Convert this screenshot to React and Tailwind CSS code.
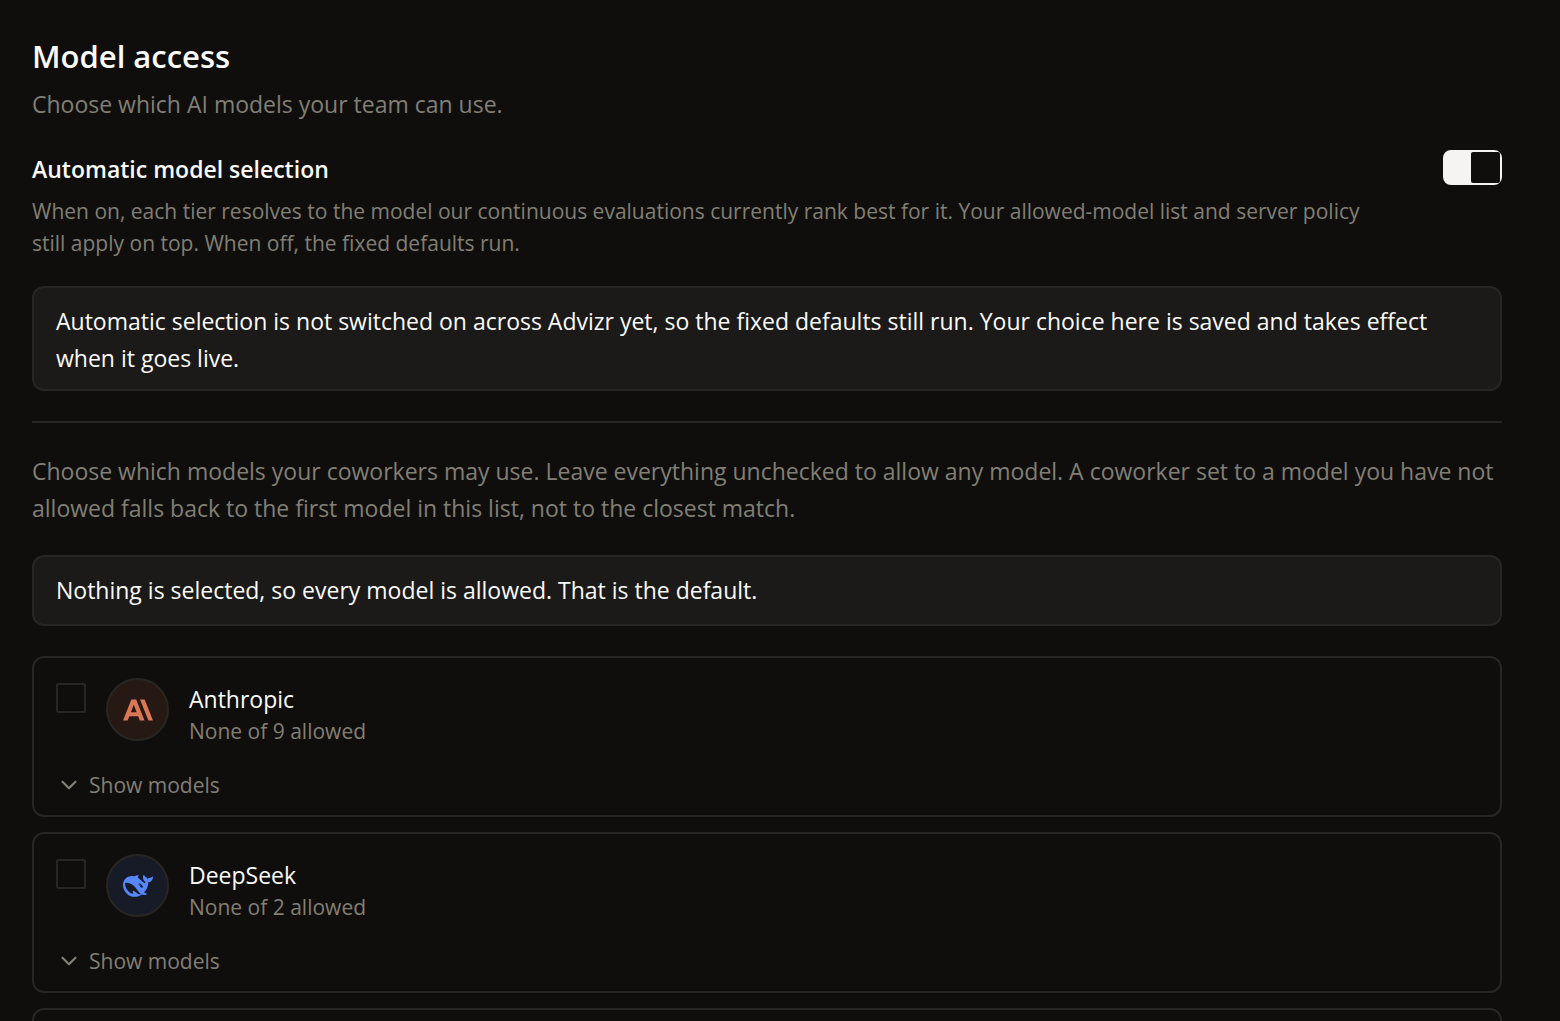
import { useState } from 'react';
import { ChevronDown } from 'lucide-react';

const AnthropicLogo = () => (
    <svg viewBox="0 0 24 24" fill="currentColor" className="w-[30px] h-[30px]" aria-hidden="true">
        <path d="M17.3041 3.541h-3.6718l6.696 16.918H24Zm-10.6082 0L0 20.459h3.7442l1.3693-3.5527h7.0052l1.3693 3.5528h3.7442L10.5363 3.5409Zm-.3712 10.2232 2.2914-5.9456 2.2914 5.9456Z" />
    </svg>
);

const DeepSeekLogo = () => (
    <svg viewBox="0 0 24 24" fill="currentColor" className="w-[30px] h-[30px]" aria-hidden="true">
        <path d="M23.748 4.482c-.254-.124-.364.113-.512.234-.051.039-.094.09-.137.136-.372.397-.806.657-1.373.626-.829-.046-1.537.214-2.163.848-.133-.782-.575-1.248-1.247-1.548-.352-.156-.708-.311-.955-.65-.172-.241-.219-.51-.305-.774-.055-.16-.11-.323-.293-.35-.2-.031-.278.136-.356.276-.313.572-.434 1.202-.422 1.84.027 1.436.633 2.58 1.838 3.393.137.093.172.187.129.323-.082.28-.18.552-.266.833-.055.179-.137.217-.329.14a5.526 5.526 0 01-1.736-1.18c-.857-.828-1.631-1.742-2.597-2.458a11.365 11.365 0 00-.689-.471c-.985-.957.13-1.743.388-1.836.27-.098.093-.432-.779-.428-.872.004-1.67.295-2.687.684a3.055 3.055 0 01-.465.137 9.597 9.597 0 00-2.883-.102c-1.885.21-3.39 1.102-4.497 2.623C.082 8.606-.231 10.684.152 12.85c.403 2.284 1.569 4.175 3.36 5.653 1.858 1.533 3.997 2.284 6.438 2.14 1.482-.085 3.133-.284 4.994-1.86.47.234.962.327 1.78.397.63.059 1.236-.03 1.705-.128.735-.156.684-.837.419-.961-2.155-1.004-1.682-.595-2.113-.926 1.096-1.296 2.746-2.642 3.392-7.003.05-.347.007-.565 0-.845-.004-.17.035-.237.23-.256a4.173 4.173 0 001.545-.475c1.396-.763 1.96-2.015 2.093-3.517.02-.23-.004-.467-.247-.588zM11.581 18c-2.089-1.642-3.102-2.183-3.52-2.16-.392.024-.321.471-.235.763.09.288.207.486.371.739.114.167.192.416-.113.603-.673.416-1.842-.14-1.897-.167-1.361-.802-2.5-1.86-3.301-3.307-.774-1.393-1.224-2.887-1.298-4.482-.02-.386.093-.522.477-.592a4.696 4.696 0 011.529-.039c2.132.312 3.946 1.265 5.468 2.774.868.86 1.525 1.887 2.202 2.891.72 1.066 1.494 2.082 2.48 2.914.348.292.625.514.891.677-.802.09-2.14.11-3.054-.614zm1-6.44a.306.306 0 01.415-.287.302.302 0 01.2.288.306.306 0 01-.31.307.303.303 0 01-.304-.308zm3.11 1.596c-.2.081-.399.151-.59.16a1.245 1.245 0 01-.798-.254c-.274-.23-.47-.358-.552-.758a1.73 1.73 0 01.016-.588c.07-.327-.008-.537-.239-.727-.187-.156-.426-.199-.688-.199a.559.559 0 01-.254-.078c-.11-.054-.2-.19-.114-.358.028-.054.16-.186.192-.21.356-.202.767-.136 1.146.016.352.144.618.408 1.001.782.391.451.462.576.685.914.176.265.336.537.445.848.067.195-.019.354-.25.452z" />
    </svg>
);

const PROVIDERS = [
    { id: 'anthropic', name: 'Anthropic', total: 9, Logo: AnthropicLogo, badge: 'bg-[#261914] text-[#d97757]' },
    { id: 'deepseek', name: 'DeepSeek', total: 2, Logo: DeepSeekLogo, badge: 'bg-[#171b27] text-[#5786fe]' },
];

const Notice = ({ children }) => (
    <p className="min-h-[71px] rounded-xl border-2 border-[#282622] bg-[#1b1a18] px-[22px] pt-[15px] pb-3 text-[23px] leading-[37px] text-[#fafaf8]">
        {children}
    </p>
);

const ProviderCard = ({ provider, checked, onToggle }) => {
    const { id, name, total, Logo, badge } = provider;

    return (
        <li className="rounded-xl border-2 border-[#282622] px-[22px] pt-5 pb-[14px]">
            <div className="flex items-start gap-5">
                <input
                    id={id}
                    type="checkbox"
                    checked={checked}
                    onChange={onToggle}
                    className="mt-[5px] size-[30px] shrink-0 appearance-none rounded-xs border-2 border-[#282622] checked:bg-[#f5f4f2]"
                />
                <span className={`flex size-[63px] shrink-0 items-center justify-center rounded-full border-2 border-[#282622] ${badge}`}>
                    <Logo />
                </span>
                <div className="flex flex-col">
                    <label htmlFor={id} className="pt-[5px] text-[23px] leading-8 text-[#fafaf8]">{name}</label>
                    <span className="text-[21px] leading-8">{checked ? 'All' : 'None'} of {total} allowed</span>
                </div>
            </div>
            <button type="button" className="mt-[22px] flex items-center gap-[7px] text-[21px] leading-8">
                <ChevronDown className="size-[26px]" strokeWidth={2} />
                Show models
            </button>
        </li>
    );
};

const App = () => {
    const [automatic, setAutomatic] = useState(true);
    const [allowed, setAllowed] = useState([]);

    const toggle = (id) => {
        setAllowed(allowed.includes(id) ? allowed.filter((a) => a !== id) : [...allowed, id]);
    };

    return (
        <main className="h-screen overflow-hidden bg-[#0f0e0c] pt-8 pr-[58px] pl-8 font-['Open_Sans','Noto_Sans',sans-serif] text-[#827f75]">
            <h1 className="text-[31px] leading-[48px] font-semibold text-[#fafaf8]">Model access</h1>
            <p className="mt-[6px] text-[23px] leading-[37px]">Choose which AI models your team can use.</p>

            {/* Automatic selection */}
            <section className="mt-[27px] flex items-start justify-between gap-14">
                <div>
                    <h2 id="auto-label" className="text-[23px] leading-[38px] font-semibold text-[#fafaf8]">Automatic model selection</h2>
                    <p className="mt-[7px] text-[21px] leading-8">
                        When on, each tier resolves to the model our continuous evaluations currently rank best for it. Your allowed-model list and server policy still apply on top. When off, the fixed defaults run.
                    </p>
                </div>
                <button
                    type="button"
                    role="switch"
                    aria-checked={automatic}
                    aria-labelledby="auto-label"
                    onClick={() => setAutomatic(!automatic)}
                    className={`flex h-[35px] w-[59px] shrink-0 rounded-lg border-2 border-[#f5f4f2] bg-[#f5f4f2] ${automatic ? 'justify-end' : 'justify-start'}`}
                >
                    <span className="h-full w-[29px] rounded-xs bg-[#0f0e0c]"></span>
                </button>
            </section>

            <div className="mt-[27px]">
                <Notice>
                    Automatic selection is not switched on across Advizr yet, so the fixed defaults still run. Your choice here is saved and takes effect when it goes live.
                </Notice>
            </div>

            <hr className="my-[30px] border-t-2 border-[#282622]" />

            {/* Allowed models */}
            <p className="text-[23px] leading-[37px]">
                Choose which models your coworkers may use. Leave everything unchecked to allow any model. A coworker set to a model you have not allowed falls back to the first model in this list, not to the closest match.
            </p>
            <div className="mt-7">
                <Notice>Nothing is selected, so every model is allowed. That is the default.</Notice>
            </div>

            <ul className="mt-[30px] flex flex-col gap-[15px]">
                {PROVIDERS.map((provider) => (
                    <ProviderCard
                        key={provider.id}
                        provider={provider}
                        checked={allowed.includes(provider.id)}
                        onToggle={() => toggle(provider.id)}
                    />
                ))}
                <li className="h-40 rounded-xl border-2 border-[#282622]"></li>
            </ul>
        </main>
    );
};

export default App;
